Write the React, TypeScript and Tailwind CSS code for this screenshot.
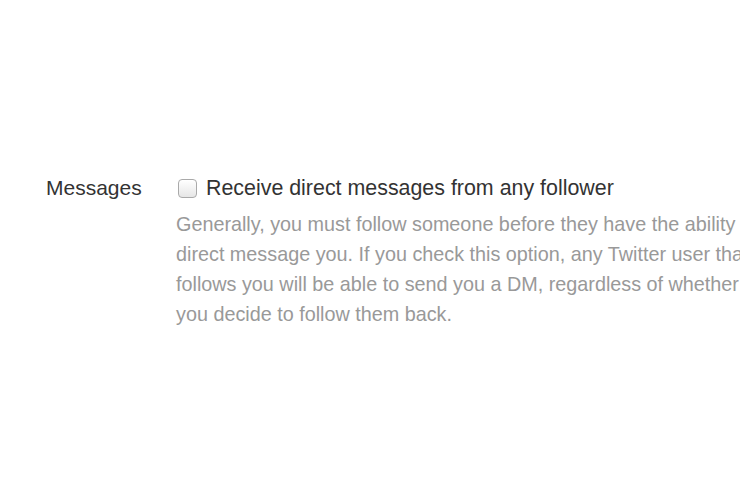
export default function App() {
  return (
    <div className="h-screen w-full overflow-hidden bg-white font-['Liberation_Sans',Arial,sans-serif] antialiased">
      <div className="flex pt-[174px] pl-[46px]">
        {/* label column */}
        <div className="w-[132px] shrink-0 text-[21px] leading-[28px] text-[#333]">Messages</div>

        <div className="flex flex-col shrink-0">
          <label className="flex items-center gap-[9px] text-[21.4px] leading-[28px] text-[#333]">
            <span className="block h-[19px] w-[19px] rounded-[4px] border border-[#a9a9a9] bg-gradient-to-b from-white to-[#e6e6e6] shadow-[inset_0_1px_1px_rgba(255,255,255,0.9)]" />
            <span className="whitespace-nowrap">Receive direct messages from any follower</span>
          </label>

          <p className="mt-[7px] -ml-[2px] whitespace-nowrap text-[19.8px] leading-[30px] text-[#999]">
            Generally, you must follow someone before they have the ability to
            <br />
            direct message you. If you check this option, any Twitter user that
            <br />
            follows you will be able to send you a DM, regardless of whether
            <br />
            you decide to follow them back.
          </p>
        </div>
      </div>
    </div>
  )
}
